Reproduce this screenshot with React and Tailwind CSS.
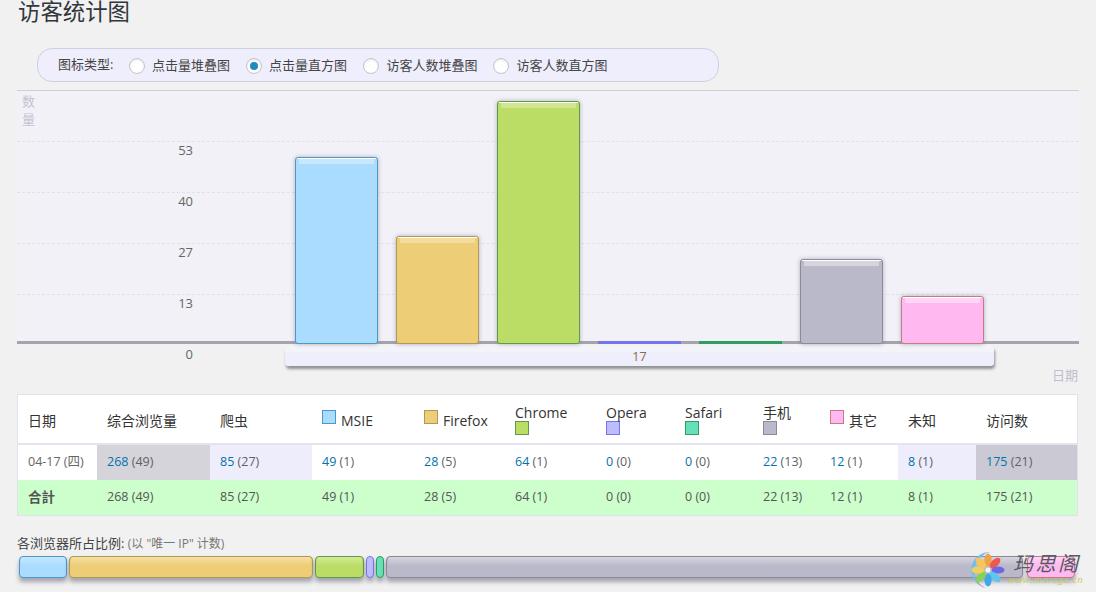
const bars = [
  { h: 187, fill: 'bg-[#a9dcff]', line: 'border-[#4f97c8]', gloss: 'bg-[#c6e8ff]' },
  { h: 108, fill: 'bg-[#edcd75]', line: 'border-[#ae9a56]', gloss: 'bg-[#f3dc9c]' },
  { h: 243, fill: 'bg-[#bcdd65]', line: 'border-[#5f9a4c]', gloss: 'bg-[#d0e78f]' },
  { h: 3, fill: 'bg-[#7676ec]', line: 'border-[#7676ec]', gloss: '' },
  { h: 3, fill: 'bg-[#2f9e5f]', line: 'border-[#2f9e5f]', gloss: '' },
  { h: 85, fill: 'bg-[#bab9ca]', line: 'border-[#8b8a99]', gloss: 'bg-[#d6d5dd]' },
  { h: 48, fill: 'bg-[#ffb9f0]', line: 'border-[#c67a86]', gloss: 'bg-[#ffd6f5]' },
]

const columns = [
  { w: 'w-[79px]', label: '日期' },
  { w: 'w-[113px]', label: '综合浏览量' },
  { w: 'w-[102px]', label: '爬虫' },
  { w: 'w-[102px]', label: 'MSIE', swatch: 'bg-[#a9dcff] border-[#4f97c8]' },
  { w: 'w-[91px]', label: 'Firefox', swatch: 'bg-[#edcd75] border-[#ae9a56]' },
  { w: 'w-[91px]', label: 'Chrome', swatch: 'bg-[#bcdd65] border-[#5f9a4c]', stacked: true },
  { w: 'w-[79px]', label: 'Opera', swatch: 'bg-[#bcbcff] border-[#7676ec]', stacked: true },
  { w: 'w-[78px]', label: 'Safari', swatch: 'bg-[#66e0b8] border-[#2f9e5f]', stacked: true },
  { w: 'w-[67px]', label: '手机', swatch: 'bg-[#bab9ca] border-[#8b8a99]', stacked: true },
  { w: 'w-[78px]', label: '其它', swatch: 'bg-[#ffb9f0] border-[#c67a86]' },
  { w: 'w-[78px]', label: '未知' },
  { w: 'w-[101px]', label: '访问数' },
]

const values = [
  ['268', '49'], ['85', '27'], ['49', '1'], ['28', '5'], ['64', '1'],
  ['0', '0'], ['0', '0'], ['22', '13'], ['12', '1'], ['8', '1'], ['175', '21'],
]

const cellBg = {
  0: 'bg-[#d5d4da]',
  1: 'bg-[#eeedfc]',
  9: 'bg-[#eeedfc]',
  10: 'bg-[#cbcad4]',
}

const shares = [
  { w: 'w-[48px]', fill: 'bg-[#a9dcff]', line: 'border-[#4f97c8]', gloss: 'from-[#c6e8ff]' },
  { w: 'w-[244px]', fill: 'bg-[#edcd75]', line: 'border-[#ae9a56]', gloss: 'from-[#f5e0a4]' },
  { w: 'w-[49px]', fill: 'bg-[#bcdd65]', line: 'border-[#5f9a4c]', gloss: 'from-[#d4ea96]' },
  { w: 'w-[8px]', fill: 'bg-[#bcbcff]', line: 'border-[#7676ec]', gloss: '' },
  { w: 'w-[8px]', fill: 'bg-[#66e0b8]', line: 'border-[#2f9e5f]', gloss: '' },
  { w: 'w-[637px]', fill: 'bg-[#bab9ca]', line: 'border-[#8b8a99]', gloss: 'from-[#d6d5dd]' },
  { w: 'w-[48px] ml-[2px]', fill: 'bg-[#ffb9f0]', line: 'border-[#c67a86]', gloss: 'from-[#ffd6f5]' },
]

function Radio({ label, checked, className }) {
  return (
    <label className={`flex items-center pt-[2px] ${className}`}>
      <span className="w-4 h-4 rounded-full border border-[#c4c4cc] bg-white shadow-[inset_0_1px_2px_rgba(0,0,0,0.1)] flex items-center justify-center">
        {checked && <span className="w-2 h-2 rounded-full bg-[#1e8cbe]" />}
      </span>
      {label}
    </label>
  )
}

function Value({ pair, link }) {
  return (
    <>
      <span className={link ? 'text-[#0073aa]' : ''}>{pair[0]}</span>{' '}
      <span className={link ? 'text-[#5f5f66]' : ''}>({pair[1]})</span>
    </>
  )
}

function Logo() {
  // 8 petals, clockwise from the top
  const petals = ['#f2a14a', '#f0584c', '#6f66e4', '#5cc6ee', '#3fa6ea', '#86d05c', '#f0d060', '#f6c65a']
  return (
    <svg width="40" height="40" viewBox="0 0 40 40" className="shrink-0">
      <path d="M22 2 A18 18 0 0 0 10 34 A21 21 0 0 1 22 2Z" fill="#74bfe8" />
      <path d="M10 34 A18 18 0 0 0 18 38 A20 20 0 0 1 7 28Z" fill="#55555f" opacity="0.6" />
      {petals.map((c, i) => (
        <ellipse key={i} cx="20" cy="10" rx="3.6" ry="6.5" fill={c} transform={`rotate(${i * 45} 20 20)`} />
      ))}
      <circle cx="20" cy="20" r="2.5" fill="#f4f4f4" />
    </svg>
  )
}

export default function App() {
  return (
    <div className="relative h-[592px] overflow-hidden bg-[#f1f1f1] px-[17px] text-[13px] text-[#444] font-['Open_Sans','Noto_Sans_CJK_SC',sans-serif]">
      <h1 className="h-[48px] pl-px text-[22.4px] leading-[23px] font-normal text-[#32373c]">访客统计图</h1>

      <div className="ml-5 w-[682px] h-[34px] flex items-center rounded-[15px] border border-[#cfcfe0] bg-[#efeefc] pl-5">
        <span className="w-[71px]">图标类型:</span>
        <Radio label="点击量堆叠图" checked={false} className="w-[117px] gap-[7px]" />
        <Radio label="点击量直方图" checked className="w-[117px] gap-[7px]" />
        <Radio label="访客人数堆叠图" checked={false} className="w-[130px] gap-[7.5px]" />
        <Radio label="访客人数直方图" checked={false} className="gap-[7.5px]" />
      </div>

      <div className="relative mt-2 h-[254px] border-t border-[#cfcfd8] bg-[#f2f1f8]">
        <div className="h-[50px] w-5 pl-[5px] pt-px text-[#c4c3d0] leading-[18px]">数<br />量</div>
        {['53', '40', '27', '13'].map((n) => (
          <div key={n} className="h-[51px] border-t border-dashed border-[#e2e1ea] pt-px w-full">
            <div className="w-[176px] text-right leading-[15px] text-[#666]">{n}</div>
          </div>
        ))}
        <div className="absolute inset-x-0 bottom-0 h-[3px] bg-[#a5a3ad]" />
        <div className="absolute inset-0 flex items-end gap-[18px] pl-[278px]">
          {bars.map((b, i) => (
            <div
              key={i}
              style={{ height: b.h }}
              className={`w-[83px] ${b.h > 3 ? 'rounded-[3px] border shadow-[0_0_4px_rgba(100,100,120,0.45)]' : ''} ${b.fill} ${b.line}`}
            >
              {b.gloss && (
                <>
                  <div className="mx-px h-px bg-white" />
                  <div className={`mx-[3px] h-[5px] ${b.gloss}`} />
                </>
              )}
            </div>
          ))}
        </div>
      </div>

      <div className="h-[50px]">
        <div className="flex">
          <div className="w-[176px] pt-px text-right text-[#666]">0</div>
          <div className="ml-[92px] mt-[2px] w-[709px] h-[20px] rounded-[4px] text-center leading-[21px] text-[12.5px] text-[#8a6a4a] bg-[linear-gradient(#f3f3fa_30%,#efeefc_30%)] shadow-[1px_3px_3px_rgba(0,0,0,0.4)]">17</div>
        </div>
        <div className="pr-px text-right text-[#c0bfce]">日期</div>
      </div>

      <table className="table-fixed w-[1061px] border border-[#e1e1ee] bg-white border-separate border-spacing-0">
        <thead>
          <tr className="h-[50px]">
            {columns.map((c) => (
              <th key={c.label} className={`${c.w} ${c.swatch ? '' : 'pt-[3px]'} border-b-2 border-[#e4e4ee] pl-[10px] text-left text-[14px] font-normal leading-[17px] text-[#333]`}>
                {c.swatch && !c.stacked && (
                  <span className={`inline-block mr-[5px] w-[14px] h-[14px] border align-[1px] ${c.swatch}`} />
                )}
                <span className={c.swatch && !c.stacked ? 'relative top-px' : ''}>{c.label}</span>
                {c.stacked && <span className={`block w-[14px] h-[14px] border ${c.swatch}`} />}
              </th>
            ))}
          </tr>
        </thead>
        <tbody>
          <tr className="h-[35px]">
            <td className="pl-[10px] text-[12.5px] text-[#666]">04-17 (四)</td>
            {values.map((v, i) => (
              <td key={i} className={`pl-[10px] text-[12.5px] ${cellBg[i] || ''}`}>
                <Value pair={v} link />
              </td>
            ))}
          </tr>
          <tr className="h-[35px] bg-[#ccffcc] text-[12.5px] text-[#555]">
            <td className="pl-[10px] text-[13.5px] font-bold">合計</td>
            {values.map((v, i) => (
              <td key={i} className="pl-[10px]">
                <Value pair={v} />
              </td>
            ))}
          </tr>
        </tbody>
      </table>

      <p className="mt-[18px] leading-[18px] text-[#444]">
        各浏览器所占比例: <span className="text-[12px] text-[#777]">(以 "唯一 IP" 计数)</span>
      </p>
      <div className="mt-[3px] ml-[2px] flex gap-[2px]">
        {shares.map((s, i) => (
          <div key={i} className={`${s.w} shrink-0 h-[22px] rounded-[4px] border shadow-[0_4px_4px_rgba(90,90,110,0.5)] ${s.fill} ${s.line}`}>
            {s.gloss && <div className={`mx-px h-[9px] rounded-t-[3px] bg-linear-to-b to-transparent ${s.gloss}`} />}
          </div>
        ))}
      </div>

      <div className="absolute right-0 bottom-0 w-[128px] h-[42px] flex items-start">
        <Logo />
        <div className="pt-[4px]">
          <div className="pl-[5px] text-[20px] leading-[20px] italic tracking-[2.5px] text-[#5a5a66]">玛思阁</div>
          <div className="mt-px text-[9px] leading-[9px] italic tracking-[1px] text-[#c8c860]">www.marsge.cn</div>
        </div>
      </div>
    </div>
  )
}
